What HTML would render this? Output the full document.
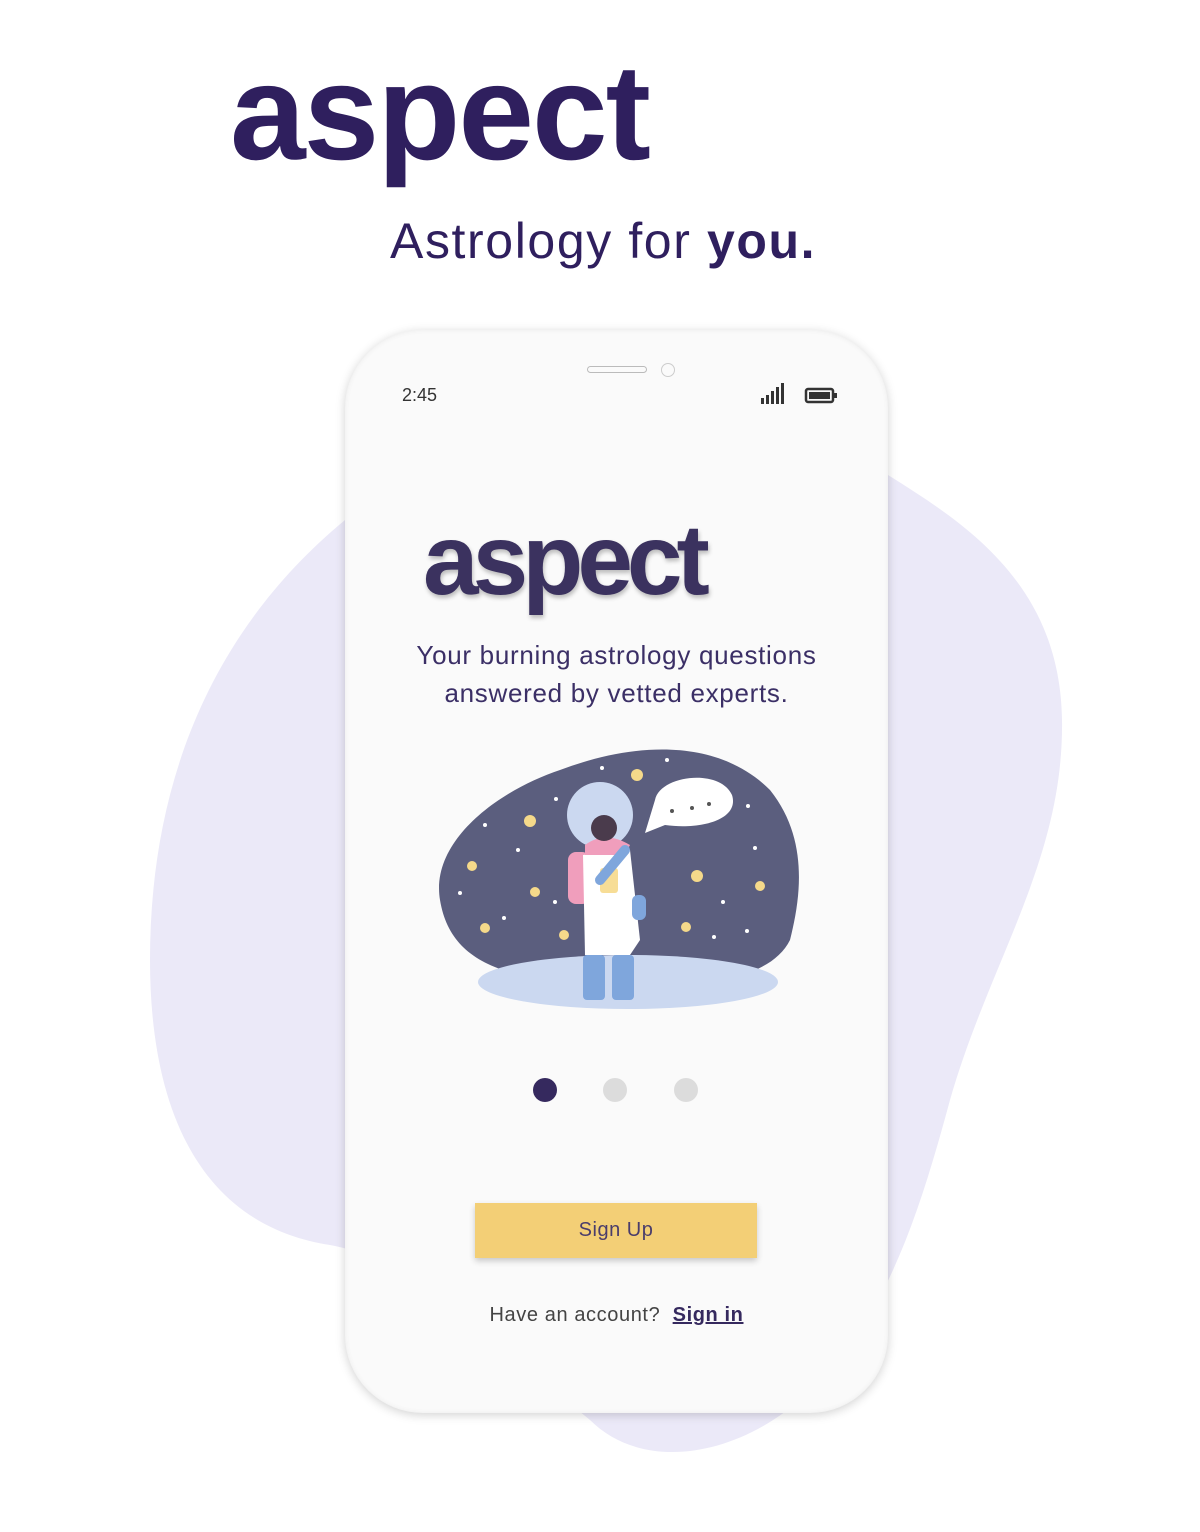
<!DOCTYPE html>
<html><head><meta charset="utf-8"><style>
html,body{margin:0;padding:0;background:#fff;width:1200px;height:1532px;overflow:hidden;position:relative;font-family:"Liberation Sans",sans-serif}
.abs{position:absolute}
.logo{left:230px;top:44px;font-size:136px;font-weight:bold;color:#2f1f5e;letter-spacing:-2px;line-height:1}
.tag{left:390px;top:216px;font-size:50px;color:#2f1f5e;line-height:1;letter-spacing:1.6px}
.phone{left:345px;top:330px;width:543px;height:1083px;border-radius:78px;background:#fafafa;box-shadow:0 2px 10px rgba(0,0,0,.18),inset 0 0 6px rgba(0,0,0,.06)}
.in{position:absolute}
</style></head><body>
<svg class="abs" style="left:0;top:0" width="1200" height="1532">
<path d="M880 470 C960 520 1060 580 1062 720 C1064 860 990 960 950 1100 C915 1230 880 1330 800 1400 C730 1460 640 1470 590 1420 C540 1380 420 1260 330 1245 C200 1225 150 1110 150 960 C150 800 200 640 345 520 Z" fill="#ebe9f8"/>
</svg>
<div class="abs logo">aspect</div>
<div class="abs tag">Astrology for <b>you.</b></div>
<div class="abs phone">
  <div class="in" style="left:242px;top:36px;width:58px;height:5px;border:1.5px solid #bbb;border-radius:4px"></div>
  <div class="in" style="left:316px;top:33px;width:12px;height:12px;border:1.5px solid #ccc;border-radius:50%"></div>
  <div class="in" style="left:57px;top:55px;font-size:18px;color:#333">2:45</div>
  <svg class="in" style="left:414px;top:52px" width="80" height="26">
    <rect x="2" y="16" width="3" height="6" fill="#333"/><rect x="7" y="13" width="3" height="9" fill="#333"/><rect x="12" y="9" width="3" height="13" fill="#333"/><rect x="17" y="5" width="3" height="17" fill="#333"/><rect x="22" y="1" width="3" height="21" fill="#333"/>
    <rect x="47" y="7" width="27" height="13" rx="2" fill="none" stroke="#333" stroke-width="2.5"/><rect x="50" y="10" width="21" height="7" fill="#333"/><rect x="75" y="11" width="3" height="5" fill="#333"/>
  </svg>
  <div class="in" style="left:78px;top:180px;font-size:100px;font-weight:bold;color:#3b325f;letter-spacing:-6px;line-height:1;text-shadow:1px 3px 4px rgba(0,0,0,.25)">aspect</div>
  <div class="in" style="left:0;width:543px;top:306px;text-align:center;font-size:26px;line-height:38px;color:#3b2f66;letter-spacing:0.7px">Your burning astrology questions<br>answered by vetted experts.</div>
  <svg class="in" style="left:85px;top:410px" width="380" height="280" viewBox="430 740 380 280">
    <path d="M440 900 C430 840 500 790 560 770 C640 740 720 740 770 790 C810 840 800 900 790 940 C770 980 700 990 600 985 C500 980 450 960 440 900 Z" fill="#5b5e7e"/>
    <ellipse cx="628" cy="982" rx="150" ry="27" fill="#cbd8f0"/>
    <path d="M655 800 C660 775 720 768 732 795 C740 820 700 830 665 825 L645 833 Z" fill="#fff"/>
    <circle cx="672" cy="811" r="2" fill="#555"/><circle cx="692" cy="808" r="2" fill="#555"/><circle cx="709" cy="804" r="2" fill="#555"/>
    <circle cx="600" cy="815" r="33" fill="#cbd8f0"/>
    <rect x="568" y="852" width="22" height="52" rx="8" fill="#f09ebc"/>
    <path d="M583 855 L630 850 L640 940 L630 955 L585 955 Z" fill="#fff"/>
    <path d="M585 845 Q605 830 630 845 L625 855 L585 855 Z" fill="#f09ebc"/>
    <circle cx="604" cy="828" r="13" fill="#4a3b4c"/>
    <rect x="600" y="868" width="18" height="25" rx="3" fill="#f7dd96"/>
    <rect x="583" y="955" width="22" height="45" rx="4" fill="#7fa6dc"/><rect x="612" y="955" width="22" height="45" rx="4" fill="#7fa6dc"/>
    <path d="M625 850 L600 880" stroke="#7fa6dc" stroke-width="10" stroke-linecap="round"/>
    <rect x="632" y="895" width="14" height="25" rx="6" fill="#7fa6dc"/>
    <g fill="#f5d98a"><circle cx="637" cy="775" r="6"/><circle cx="530" cy="821" r="6"/><circle cx="472" cy="866" r="5"/><circle cx="535" cy="892" r="5"/><circle cx="485" cy="928" r="5"/><circle cx="564" cy="935" r="5"/><circle cx="697" cy="876" r="6"/><circle cx="760" cy="886" r="5"/><circle cx="686" cy="927" r="5"/></g>
    <g fill="#fff"><circle cx="602" cy="768" r="2"/><circle cx="667" cy="760" r="2"/><circle cx="556" cy="799" r="2"/><circle cx="485" cy="825" r="2"/><circle cx="518" cy="850" r="2"/><circle cx="460" cy="893" r="2"/><circle cx="555" cy="902" r="2"/><circle cx="504" cy="918" r="2"/><circle cx="748" cy="806" r="2"/><circle cx="755" cy="848" r="2"/><circle cx="723" cy="902" r="2"/><circle cx="747" cy="931" r="2"/><circle cx="714" cy="937" r="2"/></g>
  </svg>
  <div class="in" style="left:188px;top:748px;width:24px;height:24px;border-radius:50%;background:#35295e"></div>
  <div class="in" style="left:258px;top:748px;width:24px;height:24px;border-radius:50%;background:#dcdcdc"></div>
  <div class="in" style="left:329px;top:748px;width:24px;height:24px;border-radius:50%;background:#dcdcdc"></div>
  <div class="in" style="left:130px;top:873px;width:282px;height:55px;background:#f3cf76;box-shadow:0 3px 6px rgba(0,0,0,.2);text-align:center;line-height:55px;font-size:20px;color:#4a3d6b;letter-spacing:0.5px">Sign Up</div>
  <div class="in" style="left:0;width:543px;top:974px;text-align:center;font-size:20px;color:#444;letter-spacing:0.6px">Have an account?&nbsp; <b style="color:#35295e;text-decoration:underline">Sign in</b></div>
</div>
</body></html>
